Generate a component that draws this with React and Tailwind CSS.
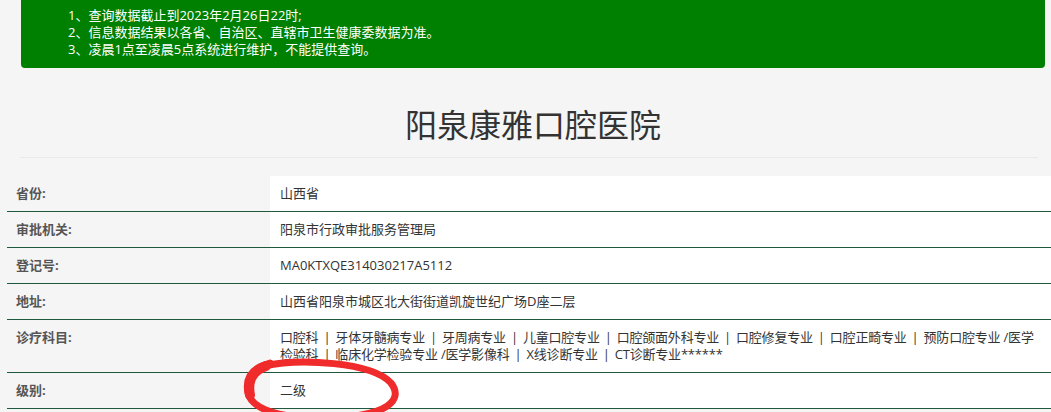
import React from 'react';

const rows = [
    { label: '省份:', value: '山西省' },
    { label: '审批机关:', value: '阳泉市行政审批服务管理局' },
    { label: '登记号:', value: 'MA0KTXQE314030217A5112' },
    { label: '地址:', value: '山西省阳泉市城区北大街街道凯旋世纪广场D座二层' },
];

const line1 = ['口腔科', '牙体牙髓病专业', '牙周病专业', '儿童口腔专业', '口腔颌面外科专业', '口腔修复专业', '口腔正畸专业', '预防口腔专业 /医学'];
const line2 = ['检验科', '临床化学检验专业 /医学影像科', 'X线诊断专业', 'CT诊断专业******'];

const Sep = () => <span className="mx-[5px]">|</span>;

const Line = ({ items }) => (
    <div className="whitespace-pre tracking-[-0.2px]">
        {items.map((t, i) => (
            <React.Fragment key={i}>
                {i > 0 && <Sep />}
                {t}
            </React.Fragment>
        ))}
    </div>
);

const Row = ({ label, children }) => (
    <div className="flex border-b-[1.5px] border-[#1f5a3f]">
        <div className="w-[263px] shrink-0 pl-[9px] py-[9px] font-bold text-[#555]">{label}</div>
        <div className="flex-1 bg-white pl-[10px] py-[9px] text-[#333]">{children}</div>
    </div>
);

export default function App() {
    return (
        <div
            className="relative min-h-screen overflow-hidden bg-[#f5f5f5] text-[13px] leading-[17px]"
            style={{ fontFamily: '"Open Sans", "Noto Sans CJK SC", sans-serif' }}
        >
            {/* Notice */}
            <div className="ml-[21px] mr-[6px] rounded-b-[4px] bg-[#008000] pl-[47px] pt-[7px] pb-[10px] text-white">
                <p>1、查询数据截止到2023年2月26日22时;</p>
                <p>2、信息数据结果以各省、自治区、直辖市卫生健康委数据为准。</p>
                <p>3、凌晨1点至凌晨5点系统进行维护，不能提供查询。</p>
            </div>

            {/* Title */}
            <div className="ml-[21px] mr-[6px] mt-[37px]">
                <h1 className="text-center text-[32px] leading-[40px] text-[#333]">阳泉康雅口腔医院</h1>
            </div>
            <div className="ml-[20px] mr-[13px] mt-[12px] h-px bg-[#e9e9e9]"></div>

            {/* Info table */}
            <div className="ml-[7px] mt-[18px]">
                {rows.map((r) => (
                    <Row key={r.label} label={r.label}>{r.value}</Row>
                ))}
                <Row label="诊疗科目:">
                    <Line items={line1} />
                    <Line items={line2} />
                </Row>
                <Row label="级别:">二级</Row>
            </div>

            {/* hand-drawn red mark */}
            <svg className="pointer-events-none absolute left-0 top-0" width="1051" height="412" viewBox="0 0 1051 412">
                <path
                    d="M 264 366 C 300 358, 372 362, 391 383 C 404 400, 388 416, 330 418 C 282 419, 252 410, 248 393 C 245 378, 252 368, 270 363"
                    fill="none"
                    stroke="#ef2b2b"
                    strokeWidth="7"
                    strokeLinecap="round"
                />
                <path
                    d="M 250 395 C 247 380, 254 370, 266 366"
                    fill="none"
                    stroke="#ef2b2b"
                    strokeWidth="10"
                    strokeLinecap="round"
                />
            </svg>
        </div>
    );
}
